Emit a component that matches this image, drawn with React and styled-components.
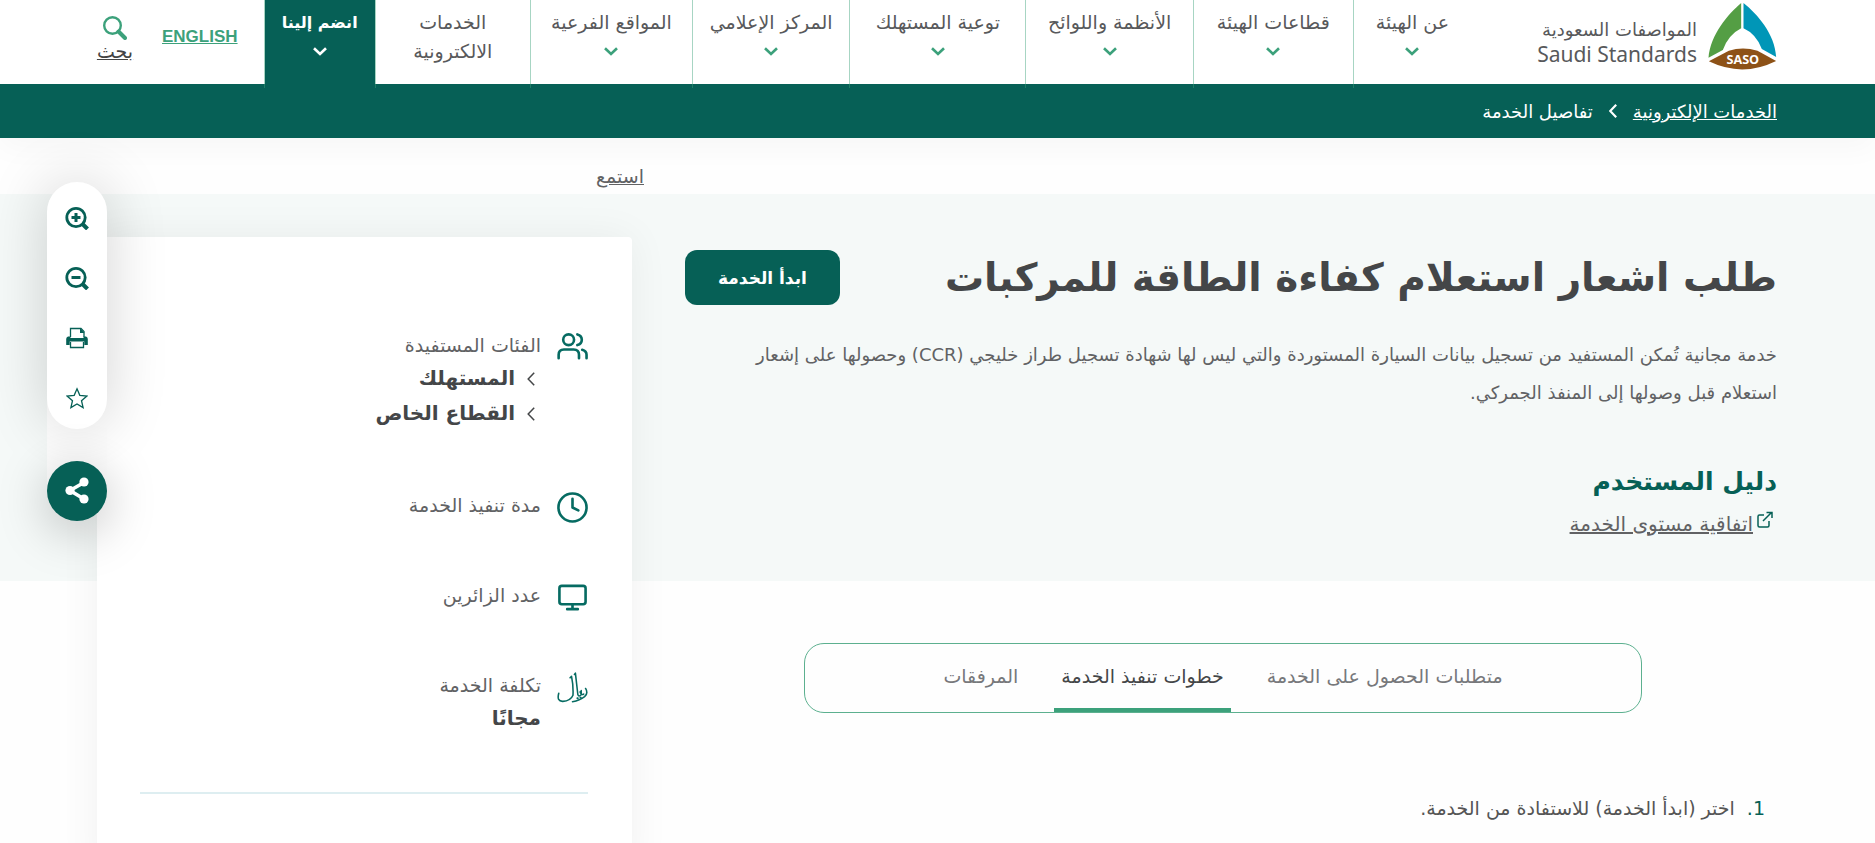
import React, { useState } from 'react';
import styled, { createGlobalStyle, css } from 'styled-components';

const GlobalStyle = createGlobalStyle`
  *, *::before, *::after {
    box-sizing: border-box;
  }
  html {
    scrollbar-width: none;
  }
  body {
    margin: 0;
    background: #fefefe;
    color: #616264;
    font-family: 'DejaVu Sans', 'Liberation Sans', sans-serif;
    font-size: 18px;
  }
  h1, h2, p, ul, ol {
    margin: 0;
    padding: 0;
    list-style: none;
  }
  a {
    color: inherit;
  }
  button {
    padding: 0;
    border: 0;
    background: none;
    color: inherit;
    font: inherit;
    cursor: pointer;
  }
`;

const Page = styled.div`
  direction: rtl;
  min-height: 100vh;
`;

const Header = styled.header`
  position: relative;
  z-index: 1;
  display: flex;
  align-items: flex-start;
  height: 84px;
  padding: 0 98px 0 97px;
  background: #fff;
`;

const Logo = styled.a`
  display: flex;
  gap: 11px;
  flex: none;
  padding-top: 3px;
  margin-left: 67px;
  text-decoration: none;
  color: #58595b;
`;

const LogoWords = styled.span`
  display: flex;
  flex-direction: column;
  align-items: flex-start;
  width: 159px;
  padding-top: 15px;
`;

const LogoArabic = styled.span`
  font-size: 18px;
  line-height: 24px;
  white-space: nowrap;
`;

const LogoLatin = styled.span`
  direction: ltr;
  font-family: 'Noto Sans', sans-serif;
  font-size: 21px;
  line-height: 24px;
  white-space: nowrap;
`;

const Nav = styled.nav`
  flex: 1;
  min-width: 0;
`;

const NavList = styled.ul`
  display: grid;
  grid-template-columns: 118fr 160fr 167fr 176fr 157fr 162fr 155fr 111fr;
  height: 88px;
`;

const NavItem = styled.li`
  border-left: 1px solid rgba(60, 161, 123, 0.45);
`;

const NavLink = styled.a`
  display: flex;
  flex-direction: column;
  align-items: center;
  height: 100%;
  padding-top: 8px;
  line-height: 29px;
  font-size: 19px;
  text-align: center;
  text-decoration: none;
  white-space: nowrap;
  color: #58595b;

  svg {
    margin-top: 10px;
    color: #3ca17b;
  }

  ${p =>
    p.$active &&
    css`
      background: #066056;
      color: #fff;
      font-weight: bold;
      font-size: 16px;

      svg {
        color: #fff;
      }
    `}
`;

const Language = styled.a`
  margin: 26px 26px 0 29px;
  font-family: 'Liberation Sans', sans-serif;
  font-size: 17px;
  font-weight: bold;
  line-height: 22px;
  color: #3ca17b;
`;

const Search = styled.a`
  display: flex;
  flex-direction: column;
  align-items: center;
  width: 36px;
  padding-top: 16px;
  font-size: 19px;
  line-height: 22px;
  color: #444;
`;

const Breadcrumb = styled.nav`
  display: flex;
  align-items: center;
  gap: 16px;
  height: 54px;
  padding: 0 98px;
  background: #066056;
  box-shadow: 0 10px 30px rgba(0, 0, 0, 0.03);
  color: #fff;
  font-size: 18px;
`;

/* page gutter, content, gap, sidebar, page gutter */
const Layout = styled.main`
  display: grid;
  grid-template-columns: 98px minmax(0, 1092fr) 53px minmax(0, 535fr) 97px;
  grid-template-rows: 56px auto 1fr;
`;

const ListenRow = styled.div`
  grid-column: 3 / 5;
  grid-row: 1;
  padding: 24px 41px 0 0;
  font-size: 19px;
  line-height: 28px;
`;

const Band = styled.div`
  grid-column: 1 / -1;
  grid-row: 2;
  background: #f5f9f8;
`;

const Hero = styled.section`
  grid-column: 2;
  grid-row: 2;
  padding: 56px 0 42px;
`;

const TitleRow = styled.div`
  display: flex;
  align-items: center;
  justify-content: space-between;
`;

const Title = styled.h1`
  font-size: 39px;
  line-height: 55px;
  color: #444648;
`;

const StartButton = styled.button`
  height: 55px;
  padding: 0 33px;
  border-radius: 12px;
  background: #066056;
  color: #fff;
  font-weight: bold;
  font-size: 17px;
`;

const Description = styled.p`
  max-width: 1032px;
  margin-top: 31px;
  font-size: 18px;
  line-height: 38px;
`;

const GuideTitle = styled.h2`
  margin-top: 50px;
  font-size: 25px;
  line-height: 40px;
  color: #066056;
`;

const GuideLink = styled.a`
  display: inline-flex;
  align-items: flex-start;
  gap: 4px;
  margin-top: 7px;
  padding-right: 4px;
  line-height: 30px;
  font-size: 20px;

  svg {
    margin-top: 2px;
    color: #066056;
  }
`;

const Details = styled.section`
  grid-column: 2;
  grid-row: 3;
  padding-top: 62px;
`;

const Tabs = styled.div`
  display: flex;
  justify-content: center;
  gap: 29px;
  max-width: 838px;
  height: 70px;
  margin-right: 135px;
  border: 1px solid #5cb08f;
  border-radius: 20px;
`;

const Tab = styled.button`
  padding: 0 7px;
  border-bottom: 4px solid transparent;
  font-size: 19px;
  color: #77787b;

  &[aria-selected='true'] {
    border-color: #3ca17b;
    color: #444648;
  }
`;

const Steps = styled.ol`
  margin-top: 78px;
  padding-right: 12px;
`;

const Step = styled.li`
  display: flex;
  gap: 12px;
  font-size: 19px;
  line-height: 34px;
  color: #555;
`;

const StepNumber = styled.span`
  color: #066056;
`;

const Sidebar = styled.aside`
  grid-column: 4;
  grid-row: 2 / 4;
  min-height: 640px;
  margin-top: 43px;
  padding: 92px 44px 0 43px;
  background: #fff;
  border-radius: 4px;
  box-shadow: 0 0 40px rgba(0, 0, 0, 0.06);
`;

const Facts = styled.ul`
  display: flex;
  flex-direction: column;
  padding-bottom: 56px;
  border-bottom: 2px solid #deeef1;
`;

const Fact = styled.li`
  display: flex;
  align-items: flex-start;
  gap: 16px;
  min-height: 90px;
  color: #066b62;

  &:first-child {
    min-height: 160px;
  }

  &:last-child {
    min-height: 0;
  }

  > svg {
    flex: none;
    margin-top: 3px;
  }
`;

const FactBody = styled.div`
  display: flex;
  flex-direction: column;
  color: #616264;
  font-size: 19px;
  line-height: 32px;
`;

const FactValue = styled.strong`
  display: flex;
  align-items: center;
  gap: 12px;
  padding-right: ${p => (p.$nested ? '6px' : '0')};
  color: #444648;
  font-size: 20px;
  line-height: 35px;
`;

const Toolbar = styled.div`
  position: fixed;
  z-index: 2;
  top: 182px;
  left: 47px;
  display: flex;
  flex-direction: column;
  gap: 32px;
  width: 60px;
  border-radius: 30px;
  background: #fff;
`;

const ToolList = styled.div`
  display: flex;
  flex-direction: column;
  padding: 6px 0 1px;
  border-radius: 30px;
  background: #fff;
  box-shadow: 0 0 60px rgba(0, 0, 0, 0.18);
`;

const Tool = styled.button`
  display: grid;
  place-items: center;
  height: 60px;
  color: #066056;
`;

const ShareButton = styled.button`
  display: grid;
  place-items: center;
  height: 60px;
  border-radius: 50%;
  background: #066056;
  box-shadow: 0 10px 50px rgba(0, 0, 0, 0.25);
  color: #fff;
`;

const SasoMark = () => (
  <svg width="69" height="67" viewBox="0 0 206 201">
    <path d="M99 0C59 34 7 95 1 164l43-23Q61 95 99 76Z" fill="#549e44" />
    <path d="M106 0c42 34 94 92 98 162l-43-24Q144 93 106 76Z" fill="#0096b7" />
    <path d="m2 175 60-32q42-13 86 0l56 31q-101 50-202 1Z" fill="#8d5217" />
    <text
      x="104"
      y="183"
      fill="#fff"
      fontFamily="Open Sans, sans-serif"
      fontSize="38"
      fontWeight="700"
      textAnchor="middle"
    >
      SASO
    </text>
  </svg>
);

const ChevronDown = () => (
  <svg width="14" height="9" viewBox="0 0 14 9" fill="none" stroke="currentColor" strokeWidth="2.6">
    <path d="m1 1.200 6 5.800 6-5.800" />
  </svg>
);

const ChevronLeft = ({ stroke = 1.5 }) => (
  <svg
    width="8"
    height="14"
    viewBox="0 0 8 14"
    fill="none"
    stroke="currentColor"
    strokeWidth={stroke}
  >
    <path d="M7.200.8 1.200 7l6 6.200" />
  </svg>
);

const SearchIcon = () => (
  <svg width="24" height="24" viewBox="0 0 24 24" fill="none" stroke="#3ca17b">
    <circle cx="9.500" cy="9.500" r="8.300" strokeWidth="2.400" />
    <path d="m15.500 15.500 6.500 6.500" strokeWidth="4" strokeLinecap="round" />
  </svg>
);

const ZoomIcon = ({ plus }) => (
  <svg width="24" height="24" viewBox="0 0 24 24" fill="none" stroke="currentColor">
    <circle cx="11" cy="11.500" r="9.200" strokeWidth="2.800" />
    <path d="m17.500 18 5 5" strokeWidth="4" />
    <path d={plus ? 'M6.500 11.500h9M11 7v9' : 'M6.500 11.500h9'} strokeWidth="3" />
  </svg>
);

const PrintIcon = () => (
  <svg width="22" height="22" viewBox="0 0 22 22" fill="none" stroke="currentColor">
    <path d="M4.500 10V1.500H15l3 3V10M4.500 15v5.500h13V15" strokeWidth="1.300" />
    <path
      d="M2 9.500h2.500V11h13V9.500H20q1.800.5 1.800 2.500v6h-3.500v-3.500H3.700V18H.2v-6q0-2 1.800-2.500ZM14 1v5h4.500Z"
      fill="currentColor"
      stroke="none"
    />
  </svg>
);

const StarIcon = () => (
  <svg width="22" height="22" viewBox="0 0 22 22" fill="none" stroke="currentColor" strokeWidth="1.300">
    <path d="m11 1.800 2.800 6.500 7.100.7-5.400 4.700 1.600 6.900-6.100-3.600-6.100 3.600 1.600-6.900L1.100 9l7.100-.7Z" />
  </svg>
);

const ShareIcon = () => (
  <svg width="24" height="28" viewBox="0 0 24 28" fill="currentColor">
    <path d="M19 5.500 5 13.500l14 8.500" fill="none" stroke="currentColor" strokeWidth="3.600" />
    <circle cx="19" cy="5" r="4.600" />
    <circle cx="5" cy="13.500" r="4.600" />
    <circle cx="19" cy="22" r="4.600" />
  </svg>
);

const ExternalIcon = () => (
  <svg width="16" height="18" viewBox="0 0 16 18" fill="none" stroke="currentColor" strokeWidth="1.500">
    <path d="M7 4H2.500Q1 4 1 5.500v9Q1 16 2.500 16h8q1.500 0 1.500-1.500V10M6 10l8.500-8.500M9.500 1.500H15V7" />
  </svg>
);

const FactIcon = ({ children }) => (
  <svg
    width="31"
    height="31"
    viewBox="0 0 32 32"
    fill="none"
    stroke="currentColor"
    strokeWidth="2.700"
    strokeLinecap="round"
    strokeLinejoin="round"
  >
    {children}
  </svg>
);

const UsersIcon = () => (
  <FactIcon>
    <circle cx="12" cy="8" r="5.600" />
    <path d="M1.700 27v-3.500q0-5.500 5.500-5.500h10q5.500 0 5.500 5.500V27M21 2.500q4.600 1.200 4.600 5.500T21 13.500M26 18.300q4.500 1.200 4.500 5.200V27" />
  </FactIcon>
);

const ClockIcon = () => (
  <FactIcon>
    <circle cx="16" cy="16" r="14.500" />
    <path d="M16 7v9l6 3" />
  </FactIcon>
);

const MonitorIcon = () => (
  <FactIcon>
    <rect x="2.500" y="4" width="27" height="19" rx="2.500" />
    <path d="M16 23v5M10.500 28h11" />
  </FactIcon>
);

const RiyalIcon = () => (
  <svg
    width="31"
    height="31"
    viewBox="0 0 32 32"
    fill="none"
    stroke="#066b62"
    strokeWidth="1.600"
    strokeLinecap="round"
    strokeLinejoin="round"
  >
    <path d="M13.500 6 15 4.500Q17 14 16.500 24 14 30 6 30.300-.5 30.500 1.800 22" />
    <path d="m18 2.500 1-1.300 2.500 22q1 2.800 3.500.3V19M23.800 20.500q1.600 4 3.700 2.300M29.500 17q3 5-1 8.500-5 4-12.500 5.200" />
    <path d="m21 27 .5.100M24.200 26.400l.4.100" strokeWidth="2" />
  </svg>
);

const navItems = [
  { label: 'عن الهيئة' },
  { label: 'قطاعات الهيئة' },
  { label: 'الأنظمة واللوائح' },
  { label: 'توعية المستهلك' },
  { label: 'المركز الإعلامي' },
  { label: 'المواقع الفرعية' },
  { label: 'الخدمات', second: 'الالكترونية' },
  { label: 'انضم إلينا', active: true }
];

const tabs = ['متطلبات الحصول على الخدمة', 'خطوات تنفيذ الخدمة', 'المرفقات'];

const facts = [
  { label: 'الفئات المستفيدة', icon: <UsersIcon />, values: ['المستهلك', 'القطاع الخاص'], nested: true },
  { label: 'مدة تنفيذ الخدمة', icon: <ClockIcon />, values: [] },
  { label: 'عدد الزائرين', icon: <MonitorIcon />, values: [] },
  { label: 'تكلفة الخدمة', icon: <RiyalIcon />, values: ['مجانًا'] }
];

export default function App() {
  const [selectedTab, setSelectedTab] = useState(1);

  return (
    <Page lang="ar">
      <GlobalStyle />
      <Header>
        <Logo href="#home">
          <SasoMark />
          <LogoWords>
            <LogoArabic>المواصفات السعودية</LogoArabic>
            <LogoLatin>Saudi Standards</LogoLatin>
          </LogoWords>
        </Logo>
        <Nav>
          <NavList>
            {navItems.map(item => (
              <NavItem key={item.label}>
                <NavLink href="#menu" $active={item.active}>
                  <span>{item.label}</span>
                  {item.second ? <span>{item.second}</span> : <ChevronDown />}
                </NavLink>
              </NavItem>
            ))}
          </NavList>
        </Nav>
        <Language href="#en">ENGLISH</Language>
        <Search href="#search">
          <SearchIcon />
          بحث
        </Search>
      </Header>

      <Breadcrumb>
        <a href="#services">الخدمات الإلكترونية</a>
        <ChevronLeft stroke={2.2} />
        <span>تفاصيل الخدمة</span>
      </Breadcrumb>

      <Layout>
        <ListenRow>
          <a href="#listen">استمع</a>
        </ListenRow>
        <Band />
        <Hero>
          <TitleRow>
            <Title>طلب اشعار استعلام كفاءة الطاقة للمركبات</Title>
            <StartButton>ابدأ الخدمة</StartButton>
          </TitleRow>
          <Description>
            خدمة مجانية تُمكن المستفيد من تسجيل بيانات السيارة المستوردة والتي ليس لها شهادة تسجيل
            طراز خليجي (CCR) وحصولها على إشعار استعلام قبل وصولها إلى المنفذ الجمركي.
          </Description>
          <GuideTitle>دليل المستخدم</GuideTitle>
          <GuideLink href="#agreement">
            <ExternalIcon />
            اتفاقية مستوى الخدمة
          </GuideLink>
        </Hero>

        <Details>
          <Tabs role="tablist">
            {tabs.map((tab, i) => (
              <Tab
                key={tab}
                role="tab"
                aria-selected={i === selectedTab}
                onClick={() => setSelectedTab(i)}
              >
                {tab}
              </Tab>
            ))}
          </Tabs>
          <Steps>
            <Step>
              <StepNumber>1.</StepNumber>
              اختر (ابدأ الخدمة) للاستفادة من الخدمة.
            </Step>
          </Steps>
        </Details>

        <Sidebar>
          <Facts>
            {facts.map(fact => (
              <Fact key={fact.label}>
                {fact.icon}
                <FactBody>
                  {fact.label}
                  {fact.values.map(value => (
                    <FactValue key={value} $nested={fact.nested}>
                      {fact.nested && <ChevronLeft />}
                      {value}
                    </FactValue>
                  ))}
                </FactBody>
              </Fact>
            ))}
          </Facts>
        </Sidebar>
      </Layout>

      <Toolbar>
        <ToolList>
          <Tool aria-label="تكبير">
            <ZoomIcon plus />
          </Tool>
          <Tool aria-label="تصغير">
            <ZoomIcon />
          </Tool>
          <Tool aria-label="طباعة">
            <PrintIcon />
          </Tool>
          <Tool aria-label="المفضلة">
            <StarIcon />
          </Tool>
        </ToolList>
        <ShareButton aria-label="مشاركة">
          <ShareIcon />
        </ShareButton>
      </Toolbar>
    </Page>
  );
}
